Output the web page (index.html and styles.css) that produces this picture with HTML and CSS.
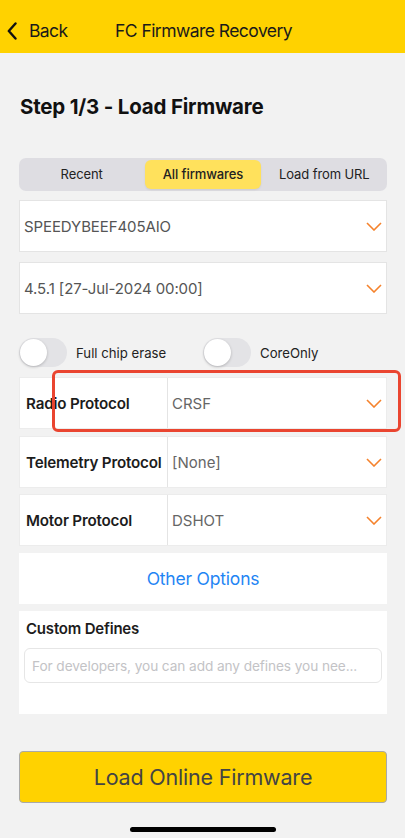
FILE: index.html
```html
<!DOCTYPE html>
<html>
<head>
<meta charset="utf-8">
<link rel="stylesheet" href="styles.css">
</head>
<body>
<div class="screen">
  <header class="nav">
    <div class="back">
      <svg class="back-icon" width="10" height="18" viewBox="0 0 10 18"><path d="M8.5 1.5 L1.8 9 L8.5 16.5" fill="none" stroke="#111" stroke-width="2.4" stroke-linecap="round" stroke-linejoin="round"/></svg>
      <span>Back</span>
    </div>
    <div class="nav-title">FC Firmware Recovery</div>
  </header>

  <main class="content">
    <h1 class="step">Step 1/3 - Load Firmware</h1>

    <div class="segment">
      <div class="seg-item">Recent</div>
      <div class="seg-item active">All firmwares</div>
      <div class="seg-item">Load from URL</div>
    </div>

    <div class="select sel-1">
      <span class="select-text">SPEEDYBEEF405AIO</span>
      <svg class="chev" width="16" height="9" viewBox="0 0 16 9"><path d="M1 1 L8 8 L15 1" fill="none" stroke="#f5822c" stroke-width="1.6"/></svg>
    </div>
    <div class="select sel-2">
      <span class="select-text">4.5.1 [27-Jul-2024 00:00]</span>
      <svg class="chev" width="16" height="9" viewBox="0 0 16 9"><path d="M1 1 L8 8 L15 1" fill="none" stroke="#f5822c" stroke-width="1.6"/></svg>
    </div>

    <div class="toggles">
      <div class="toggle-item">
        <div class="switch"><div class="knob"></div></div>
        <span>Full chip erase</span>
      </div>
      <div class="toggle-item">
        <div class="switch"><div class="knob"></div></div>
        <span>CoreOnly</span>
      </div>
    </div>

    <div class="row row-radio">
      <div class="row-label">Radio Protocol</div>
      <div class="row-value">
        <span>CRSF</span>
        <svg class="chev" width="16" height="9" viewBox="0 0 16 9"><path d="M1 1 L8 8 L15 1" fill="none" stroke="#f5822c" stroke-width="1.6"/></svg>
      </div>
      <div class="highlight"></div>
    </div>
    <div class="row row-telemetry">
      <div class="row-label">Telemetry Protocol</div>
      <div class="row-value">
        <span>[None]</span>
        <svg class="chev" width="16" height="9" viewBox="0 0 16 9"><path d="M1 1 L8 8 L15 1" fill="none" stroke="#f5822c" stroke-width="1.6"/></svg>
      </div>
    </div>
    <div class="row row-motor">
      <div class="row-label">Motor Protocol</div>
      <div class="row-value">
        <span>DSHOT</span>
        <svg class="chev" width="16" height="9" viewBox="0 0 16 9"><path d="M1 1 L8 8 L15 1" fill="none" stroke="#f5822c" stroke-width="1.6"/></svg>
      </div>
    </div>

    <div class="other">Other Options</div>

    <div class="defines">
      <div class="defines-title">Custom Defines</div>
      <div class="defines-input">For developers, you can add any defines you nee...</div>
    </div>

    <div class="load-btn">Load Online Firmware</div>
  </main>

  <div class="home-bar"></div>
</div>
</body>
</html>
```
FILE: styles.css
```css
* { box-sizing: border-box; }
html, body { margin: 0; padding: 0; }
body {
  background: #f2f2f2;
  font-family: Inter, "Noto Sans", sans-serif;
  color: #1c1c1c;
}
.screen {
  width: 405px;
  height: 838px;
  display: flex;
  flex-direction: column;
  overflow: hidden;
}
.nav {
  height: 53px;
  background: #ffd200;
  display: flex;
  align-items: center;
  padding-top: 8px;
  flex-shrink: 0;
}
.back {
  display: flex;
  align-items: center;
  padding-left: 7px;
  width: 115px;
}
.back-icon { margin-right: 12px; }
.back span {
  font-size: 17.5px;
  color: #1a1a1a;
  letter-spacing: -0.6px;
}
.nav-title {
  font-size: 17.5px;
  color: #1a1a1a;
  letter-spacing: -0.55px;
}
.content {
  padding: 0 18px 0 19px;
  display: flex;
  flex-direction: column;
}
.step {
  margin: 42px 0 0 1px;
  font-size: 20.5px;
  line-height: 24px;
  font-weight: 700;
  letter-spacing: -0.2px;
  color: #111;
}
.segment {
  margin-top: 39px;
  height: 33px;
  background: #dedde2;
  border-radius: 7px;
  display: grid;
  grid-template-columns: 1fr 1fr 1fr;
  align-items: center;
  padding: 2px 2px;
}
.seg-item {
  font-size: 13px;
  text-align: center;
  color: #222;
  height: 29px;
  line-height: 29px;
  letter-spacing: -0.1px;
}
.seg-item.active {
  background: #ffe15c;
  border-radius: 6px;
  font-weight: 500;
  margin: 0 3px 0 3px;
  box-shadow: 0 1px 2px rgba(0,0,0,0.08);
}
.select {
  height: 52px;
  background: #fff;
  border: 1px solid #e4e4e4;
  display: flex;
  align-items: center;
  justify-content: space-between;
  padding: 0 4px 0 4px;
}
.sel-1 { margin-top: 9px; }
.sel-2 { margin-top: 10px; }
.select-text {
  font-size: 15px;
  color: #555;
  letter-spacing: -0.1px;
}
.chev { margin-right: 0; }
.toggles {
  margin-top: 24px;
  height: 29px;
  display: flex;
  align-items: center;
}
.toggle-item {
  display: flex;
  align-items: center;
  width: 184px;
}
.toggle-item span {
  font-size: 13.2px;
  color: #222;
  margin-left: 9px;
}
.switch {
  width: 48px;
  height: 29px;
  border-radius: 15px;
  background: #e3e3e6;
  padding: 1px;
}
.knob {
  width: 27px;
  height: 27px;
  border-radius: 50%;
  background: #fff;
  box-shadow: 0 1px 3px rgba(0,0,0,0.22);
}
.row {
  position: relative;
  height: 52px;
  background: #fff;
  border: 1px solid #ececec;
  display: flex;
}
.row-radio { margin-top: 10px; }
.row-telemetry { margin-top: 7px; }
.row-motor { margin-top: 6px; }
.row-label {
  width: 147px;
  display: flex;
  align-items: center;
  padding-left: 6px;
  font-size: 15.2px;
  font-weight: 600;
  color: #1c1c1c;
  white-space: nowrap;
  letter-spacing: -0.2px;
}
.row-value {
  flex: 1;
  border-left: 1px solid #e4e4e4;
  display: flex;
  align-items: center;
  justify-content: space-between;
  padding: 0 4px 0 4px;
  font-size: 15px;
  color: #666;
}
.highlight {
  position: absolute;
  left: 32px;
  right: -15px;
  top: -8px;
  bottom: -4px;
  border: 3px solid #ea4530;
  border-radius: 6px;
}
.other {
  margin-top: 7px;
  height: 51px;
  background: #fff;
  display: flex;
  align-items: center;
  justify-content: center;
  font-size: 17.5px;
  color: #1f85f4;
  letter-spacing: -0.2px;
}
.defines {
  margin-top: 7px;
  height: 103px;
  background: #fff;
  padding: 8px 5px 0 5px;
}
.defines-title {
  font-size: 15px;
  font-weight: 600;
  color: #1c1c1c;
  padding-left: 2px;
  line-height: 20px;
  letter-spacing: -0.2px;
}
.defines-input {
  margin-top: 9px;
  height: 35px;
  border: 1px solid #e6e6e6;
  border-radius: 6px;
  display: flex;
  align-items: center;
  padding-left: 7px;
  font-size: 13.7px;
  color: #c3c3c6;
  white-space: nowrap;
  overflow: hidden;
  letter-spacing: -0.1px;
}
.load-btn {
  margin-top: 37px;
  height: 52px;
  background: #ffd200;
  border: 1px solid #a9a9a9;
  border-radius: 4px;
  display: flex;
  align-items: center;
  justify-content: center;
  font-size: 21.5px;
  color: #444;
  letter-spacing: -0.2px;
}
.home-bar {
  margin: 24px auto 0;
  width: 146px;
  height: 5px;
  border-radius: 3px;
  background: #000;
}
```
